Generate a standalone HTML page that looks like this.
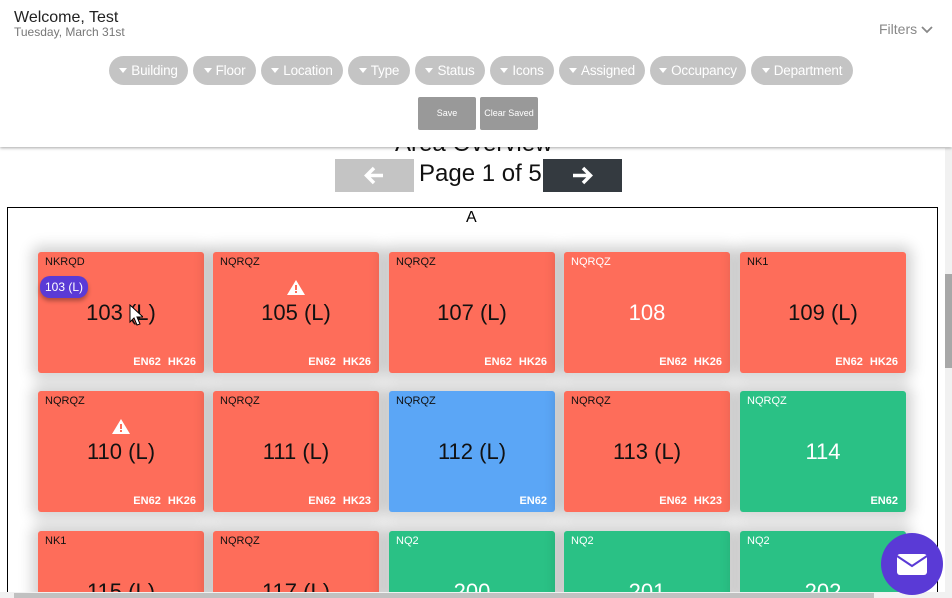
<!DOCTYPE html>
<html style="width:952px;height:598px;overflow:hidden"><head><style>
*{box-sizing:border-box;margin:0;padding:0}
body{width:952px;height:598px;overflow:hidden;background:#fff;font-family:"Liberation Sans",Arial,sans-serif;position:relative}
.hdr{position:absolute;left:0;top:0;width:952px;height:147px;background:#fff;box-shadow:0 1px 3px rgba(0,0,0,.35);z-index:5}
.t1{position:absolute;left:14px;top:9px;font-size:16px;color:#222}
.t2{position:absolute;left:14px;top:25px;font-size:12px;color:#777}
.filt{position:absolute;left:879px;top:21px;font-size:14px;color:#888}
.pill{position:absolute;top:56px;height:29px;border-radius:15px;background:#c4c4c4;color:#fff;font-size:13.5px;line-height:29px;text-align:center;letter-spacing:-.2px}
.pill:before{content:"";display:inline-block;border-left:4px solid transparent;border-right:4px solid transparent;border-top:5px solid #fff;margin-right:4px;vertical-align:2px}
.btn{position:absolute;top:97px;height:33px;background:#999;color:#fff;font-size:9px;line-height:33px;text-align:center;border-radius:2px}
.ao{position:absolute;left:395px;top:130px;font-size:24px;color:#111}
.nav{position:absolute;top:159px;height:33px;width:79px}
.pg{position:absolute;left:419px;top:160px;font-size:24px;color:#111}
.box{position:absolute;left:7px;top:207px;width:931px;height:391px;border:1px solid #000;border-bottom:none}
.A{position:absolute;left:466px;top:209px;font-size:16px}
.tile{position:absolute;width:166px;height:121px;border-radius:3px;box-shadow:0 0 14px 6px rgba(0,0,0,.18);color:#111}
.r{background:#fe6d5a}.b{background:#5ba6f6}.g{background:#2ac185;color:#fff}
.tile .c{position:absolute;left:7px;top:4px;font-size:11px}
.tile .n{position:absolute;left:0;right:0;top:48px;text-align:center;font-size:22px}
.tile .f{position:absolute;right:8px;bottom:5px;font-size:11px;font-weight:bold;color:#fff;word-spacing:4px}
.row3{height:67px;overflow:hidden}
.warn{position:absolute;left:73px;top:27px}
.sb{position:absolute;left:945px;top:148px;width:7px;height:450px;background:#f1f1f1}
.th{position:absolute;left:945px;top:274px;width:7px;height:94px;background:#a8a8a8}
.hb{position:absolute;left:0;top:592px;width:945px;height:6px;background:#f1f1f1}
.hbt{position:absolute;left:14px;top:593px;width:860px;height:5px;background:#c1c1c1}
.mail{position:absolute;left:881px;top:533px;width:62px;height:62px;border-radius:50%;background:#5a3ad6;z-index:6}
</style></head><body>
<div class="box"></div>
<div class="A">A</div>
<div class="ao">Area Overview</div>
<div class="nav" style="left:335px;background:#c4c4c4"><svg width="79" height="33"><path d="M32 16.5h16M39 9l-7.5 7.5L39 24" stroke="#fff" stroke-width="3.5" fill="none"/></svg></div>
<div class="pg">Page 1 of 5</div>
<div class="nav" style="left:543px;background:#343a40"><svg width="79" height="33"><path d="M30 16.5h17M40 9l7.5 7.5L40 24" stroke="#fff" stroke-width="3.5" fill="none"/></svg></div>

<div class="tile r" style="left:38px;top:252px"><div class="c">NKRQD</div><div class="n">103 (L)</div><div class="f">EN62 HK26</div></div>
<div class="tile r" style="left:213px;top:252px"><div class="c">NQRQZ</div><svg class="warn" width="20" height="17"><path d="M10 1L19 16H1Z" fill="#fff"/><rect x="9" y="6" width="2" height="5" fill="#fe6d5a"/><rect x="9" y="12" width="2" height="2" fill="#fe6d5a"/></svg><div class="n">105 (L)</div><div class="f">EN62 HK26</div></div>
<div class="tile r" style="left:389px;top:252px"><div class="c">NQRQZ</div><div class="n">107 (L)</div><div class="f">EN62 HK26</div></div>
<div class="tile r" style="left:564px;top:252px;color:#fff"><div class="c">NQRQZ</div><div class="n">108</div><div class="f">EN62 HK26</div></div>
<div class="tile r" style="left:740px;top:252px"><div class="c">NK1</div><div class="n">109 (L)</div><div class="f">EN62 HK26</div></div>

<div class="tile r" style="left:38px;top:391px"><div class="c">NQRQZ</div><svg class="warn" width="20" height="17"><path d="M10 1L19 16H1Z" fill="#fff"/><rect x="9" y="6" width="2" height="5" fill="#fe6d5a"/><rect x="9" y="12" width="2" height="2" fill="#fe6d5a"/></svg><div class="n">110 (L)</div><div class="f">EN62 HK26</div></div>
<div class="tile r" style="left:213px;top:391px"><div class="c">NQRQZ</div><div class="n">111 (L)</div><div class="f">EN62 HK23</div></div>
<div class="tile b" style="left:389px;top:391px"><div class="c">NQRQZ</div><div class="n">112 (L)</div><div class="f">EN62</div></div>
<div class="tile r" style="left:564px;top:391px"><div class="c">NQRQZ</div><div class="n">113 (L)</div><div class="f">EN62 HK23</div></div>
<div class="tile g" style="left:740px;top:391px"><div class="c">NQRQZ</div><div class="n">114</div><div class="f">EN62</div></div>

<div class="tile r row3" style="left:38px;top:531px"><div class="c">NK1</div><div class="n">115 (L)</div></div>
<div class="tile r row3" style="left:213px;top:531px"><div class="c">NQRQZ</div><div class="n">117 (L)</div></div>
<div class="tile g row3" style="left:389px;top:531px"><div class="c">NQ2</div><div class="n">200</div></div>
<div class="tile g row3" style="left:564px;top:531px"><div class="c">NQ2</div><div class="n">201</div></div>
<div class="tile g row3" style="left:740px;top:531px"><div class="c">NQ2</div><div class="n">202</div></div>

<div style="position:absolute;left:40px;top:276px;width:48px;height:22px;border-radius:10px;background:#5a3ad6;color:#fff;font-size:12px;line-height:22px;text-align:center;box-shadow:0 3px 4px rgba(0,0,0,.3)">103 (L)</div>
<svg style="position:absolute;left:129px;top:304px" width="14" height="22"><path d="M1 1v17l4-4 3 7 3-1-3-7h6Z" fill="#fff" stroke="#000"/></svg>

<div class="hdr">
<div class="t1">Welcome, Test</div>
<div class="t2">Tuesday, March 31st</div>
<div class="filt">Filters <svg width="12" height="9"><path d="M1 2l5 5 5-5" stroke="#888" stroke-width="1.8" fill="none"/></svg></div>
<div class="pill" style="left:109px;width:79px">Building</div>
<div class="pill" style="left:193px;width:63px">Floor</div>
<div class="pill" style="left:261px;width:82px">Location</div>
<div class="pill" style="left:348px;width:62px">Type</div>
<div class="pill" style="left:415px;width:70px">Status</div>
<div class="pill" style="left:490px;width:64px">Icons</div>
<div class="pill" style="left:559px;width:86px">Assigned</div>
<div class="pill" style="left:650px;width:96px">Occupancy</div>
<div class="pill" style="left:751px;width:102px">Department</div>
<div class="btn" style="left:418px;width:58px">Save</div>
<div class="btn" style="left:480px;width:58px">Clear Saved</div>
</div>
<div class="sb"></div><div class="th"></div>
<div class="hb"></div><div class="hbt"></div>
<div class="mail"><svg width="62" height="62"><rect x="16" y="21" width="30" height="21" rx="3" fill="#fff"/><path d="M16 23l15 10 15-10" stroke="#5a3ad6" stroke-width="2" fill="none"/></svg></div>
</body></html>
